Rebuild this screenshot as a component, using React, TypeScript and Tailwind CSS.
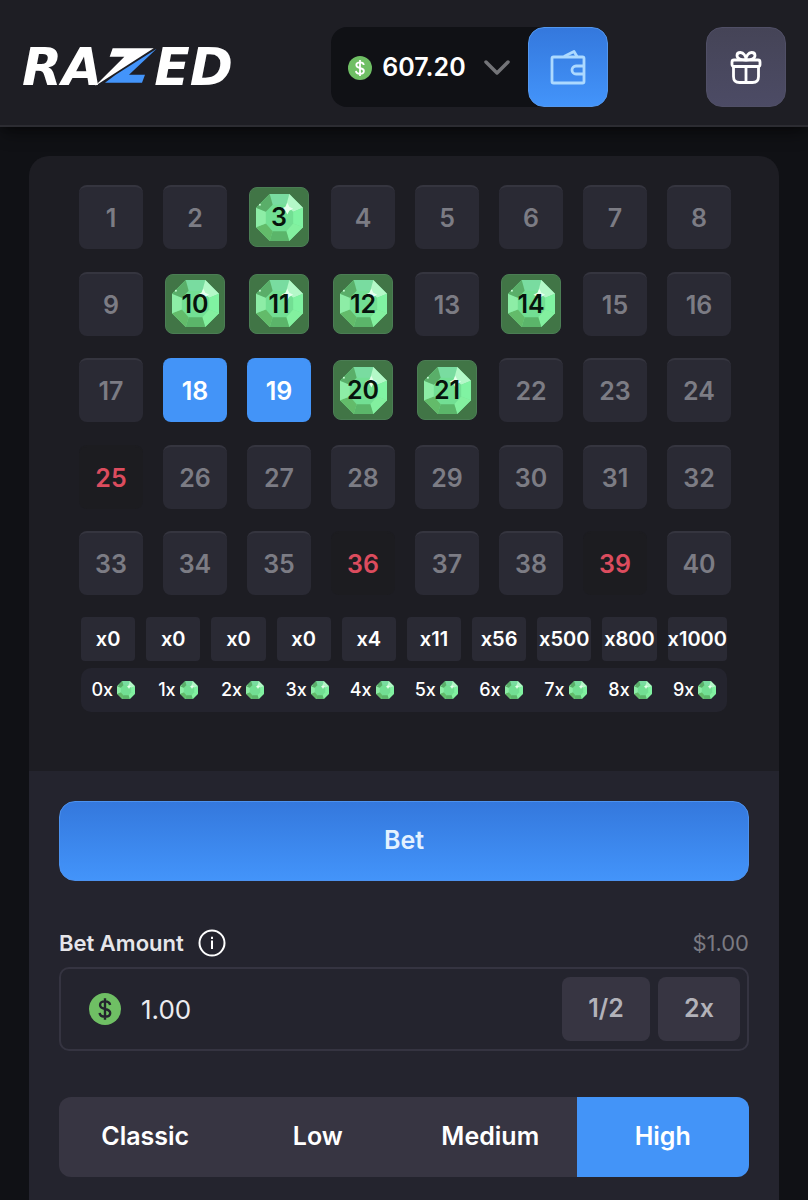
import { useState } from 'react';
import clsx from 'clsx';

const numbers = Array.from({ length: 40 }, (_, i) => i + 1);
const hits = [3, 10, 11, 12, 14, 20, 21];
const picked = [18, 19];
const misses = [25, 36, 39];
const multipliers = ['x0', 'x0', 'x0', 'x0', 'x4', 'x11', 'x56', 'x500', 'x800', 'x1000'];
const risks = ['Classic', 'Low', 'Medium', 'High'];

function Gem({ className }: { className?: string }) {
    return (
        <svg viewBox="0 0 48 48" className={className} aria-hidden="true">
            <polygon points="14,0 34,0 48,14 48,34 34,48 14,48 0,34 0,14" fill="#72df93" />
            <polygon points="14,0 34,0 31,11 17,11" fill="#79dca0" />
            <polygon points="34,0 48,14 38,18 31,11" fill="#b4f8c8" />
            <polygon points="48,14 48,34 38,30 38,18" fill="#80f3a2" />
            <polygon points="48,34 34,48 31,38 38,30" fill="#83f09f" />
            <polygon points="34,48 14,48 17,38 31,38" fill="#5bb56a" />
            <polygon points="14,48 0,34 10,30 17,38" fill="#63bb6a" />
            <polygon points="0,34 0,14 10,18 10,30" fill="#8deda6" />
            <polygon points="0,14 14,0 17,11 10,18" fill="#5aae69" />
            <polygon points="32,9 34,13 38,15 34,17 32,21 30,17 26,15 30,13" fill="#e6ffec" />
            <circle cx="4" cy="11" r="1" fill="#c9ffd6" />
        </svg>
    );
}

function Coin({ className, sign }: { className?: string; sign: string }) {
    return (
        <svg viewBox="0 0 24 24" className={className} fill="none" aria-hidden="true">
            <circle cx="12" cy="12" r="12" fill="#6fbf64" />
            <path
                d="M15.8 9c-.2-1.700-1.700-2.700-3.800-2.700s-3.700 1-3.700 2.700c0 1.800 1.600 2.500 3.700 3s3.900 1.200 3.900 3c0 1.700-1.600 2.800-3.900 2.800s-3.900-1.100-4-2.900M12 4v16"
                stroke={sign}
                strokeWidth="1.800"
            />
        </svg>
    );
}

function Logo() {
    return (
        <a href="#" aria-label="Razed" className="flex h-20 items-center font-['DejaVu_Sans'] text-[52px] leading-none font-bold text-white italic">
            <span>RA</span>
            <svg viewBox="288 80 190 120" className="-mr-1 -ml-2 h-10 w-16" aria-hidden="true">
                <polygon points="343,84 466,84 290,197 378,109 334,109" fill="#fff" />
                <polygon points="475,85 392,163 440,163 431,187 320,187 352,163" fill="#4394fa" />
            </svg>
            <span>ED</span>
        </a>
    );
}

function Header() {
    return (
        <header className="flex items-center justify-between border-b-2 border-[#2c2c32] bg-[#1e1e24] px-[22px] pt-[27px] pb-[18px] shadow-lg shadow-black/40">
            <Logo />
            <div className="flex h-20 rounded-2xl bg-[#101115]">
                <button className="flex items-center pt-0.5 pr-[18px] pl-[17px] text-[25px] font-semibold text-white">
                    <Coin className="mr-2.5 size-6" sign="#fff" />
                    607.20
                    <svg viewBox="0 0 26 16" className="ml-[18px] h-4 w-[26px]" fill="none" aria-hidden="true">
                        <path d="M2 2l11 11L24 2" stroke="#737478" strokeWidth="3.500" strokeLinecap="round" strokeLinejoin="round" />
                    </svg>
                </button>
                <button aria-label="Wallet" className="flex size-20 items-center justify-center rounded-2xl border border-[#5397ee] bg-linear-to-b from-[#3478dd] to-[#4394fa]">
                    <svg viewBox="0 0 36 36" className="size-9" fill="none" stroke="#acd9ff" strokeWidth="2.800" strokeLinejoin="round" aria-hidden="true">
                        <rect x="2" y="8" width="32" height="26" rx="1.500" />
                        <path d="M34 17h-8a4 4 0 0 0 0 8h8M14 7.500L24 2.500l3 5" />
                    </svg>
                </button>
            </div>
            <button aria-label="Rewards" className="flex size-20 items-center justify-center rounded-2xl border border-[#504f66] bg-linear-to-b from-[#454457] to-[#4c4b65]">
                <svg viewBox="0 0 34 36" className="h-9 w-[34px]" fill="none" stroke="#fff" strokeWidth="2.800" strokeLinejoin="round" aria-hidden="true">
                    <rect x="3" y="11" width="28" height="6.500" rx="2" />
                    <path d="M4.500 17.500v10c0 4 2 6 6 6h13c4 0 6-2 6-6v-10M17 17.500v16" />
                    <path d="M17 11c-4 0-9-1-9-4.500C8 4.500 9.500 3.500 11.500 3.500c3 0 5.500 3.500 5.500 7.500zM17 11c4 0 9-1 9-4.500 0-2-1.500-3-3.500-3-3 0-5.500 3.500-5.500 7.500z" />
                </svg>
            </button>
        </header>
    );
}

function Tile({ value }: { value: number }) {
    if (hits.includes(value)) {
        return (
            <button className="relative flex h-16 items-center justify-center p-0.5 text-[#07130c]">
                <span className="flex size-full items-center justify-center rounded-lg border border-[#4b7d54] bg-[#417546]">
                    <Gem className="size-[47px]" />
                </span>
                <span className="absolute inset-0 flex items-center justify-center pt-0.5">{value}</span>
            </button>
        );
    }
    return (
        <button
            className={clsx(
                'h-16 rounded-lg border-t-2 pt-0.5',
                picked.includes(value) && 'border-[#4394f8] bg-[#4394f8] text-white',
                misses.includes(value) && 'border-[#1c1c20] bg-[#1c1c20] text-[#dc4c5e]',
                !picked.includes(value) && !misses.includes(value) && 'border-[#35353f] bg-[#2a2a34] text-[#7c7c84]',
            )}
        >
            {value}
        </button>
    );
}

export default function App() {
    const [risk, setRisk] = useState('High');
    const [amount, setAmount] = useState('1.00');

    return (
        <div className="bg-[#101115] font-['Inter',sans-serif]">
            <Header />
            <main className="mx-[29px] mt-[29px] overflow-hidden rounded-t-[20px] bg-[#1d1d23]">
                {/* Board */}
                <section className="pt-[29px] pr-12 pb-[59px] pl-[50px]">
                    <div className="grid h-[410px] grid-cols-8 content-between gap-x-5 text-[25px] font-semibold">
                        {numbers.map((n) => (
                            <Tile key={n} value={n} />
                        ))}
                    </div>
                    <div className="mt-[22px] flex gap-[11px] pr-1 pl-0.5 text-xl font-semibold text-white">
                        {multipliers.map((m, i) => (
                            <div key={i} className="flex h-11 flex-1 items-center justify-center rounded-sm bg-[#2a2a34]">
                                {m}
                            </div>
                        ))}
                    </div>
                    <div className="mt-[7px] mr-1 ml-0.5 flex h-11 items-center rounded-[10px] bg-[#24242e] text-lg font-medium text-white">
                        {multipliers.map((_, i) => (
                            <div key={i} className="flex flex-1 items-center justify-center gap-1">
                                {i}x
                                <Gem className="size-[18px]" />
                            </div>
                        ))}
                    </div>
                </section>

                {/* Controls */}
                <section className="bg-[#24242e] px-[30px] pt-[30px] pb-[23px]">
                    <button className="h-20 w-full rounded-2xl border border-[#4c92ef] bg-linear-to-b from-[#3478dd] to-[#4394fa] text-[25px] font-semibold text-[#e4f2ff]">
                        Bet
                    </button>
                    <div className="mt-[46px] flex h-8 items-center justify-between">
                        <div className="flex items-center gap-3.5">
                            <label htmlFor="amount" className="text-[22px] font-semibold text-[#e6e6ea]">
                                Bet Amount
                            </label>
                            <button aria-label="About the bet amount">
                                <svg viewBox="0 0 28 28" className="size-7" fill="none" stroke="#fff" strokeWidth="2" aria-hidden="true">
                                    <circle cx="14" cy="14" r="12.500" />
                                    <path d="M14 11.500V20M14 7.800v2.200" />
                                </svg>
                            </button>
                        </div>
                        <span className="text-[22px] text-[#7a7a82]">$1.00</span>
                    </div>
                    <div className="mt-2 flex h-[84px] items-center gap-2 rounded-[10px] border-2 border-[#353441] pr-[7px] pl-7">
                        <Coin className="size-8 shrink-0" sign="#24242e" />
                        <input
                            id="amount"
                            value={amount}
                            onChange={(e) => setAmount(e.target.value)}
                            className="ml-3 min-w-0 flex-1 bg-transparent text-[26px] text-[#ececf0] outline-none"
                        />
                        <button className="h-16 w-[88px] rounded-lg bg-[#373542] text-[25px] font-semibold text-[#b2b2b9]">1/2</button>
                        <button className="h-16 w-[82px] rounded-lg bg-[#373542] text-[25px] font-semibold text-[#b2b2b9]">2x</button>
                    </div>
                    <div className="mt-[46px] grid h-20 grid-cols-4 overflow-hidden rounded-xl bg-[#373542] text-[25px] font-semibold text-white">
                        {risks.map((r) => (
                            <button key={r} onClick={() => setRisk(r)} aria-pressed={r === risk} className={clsx(r === risk && 'bg-[#4394f8]')}>
                                {r}
                            </button>
                        ))}
                    </div>
                </section>
            </main>
        </div>
    );
}
